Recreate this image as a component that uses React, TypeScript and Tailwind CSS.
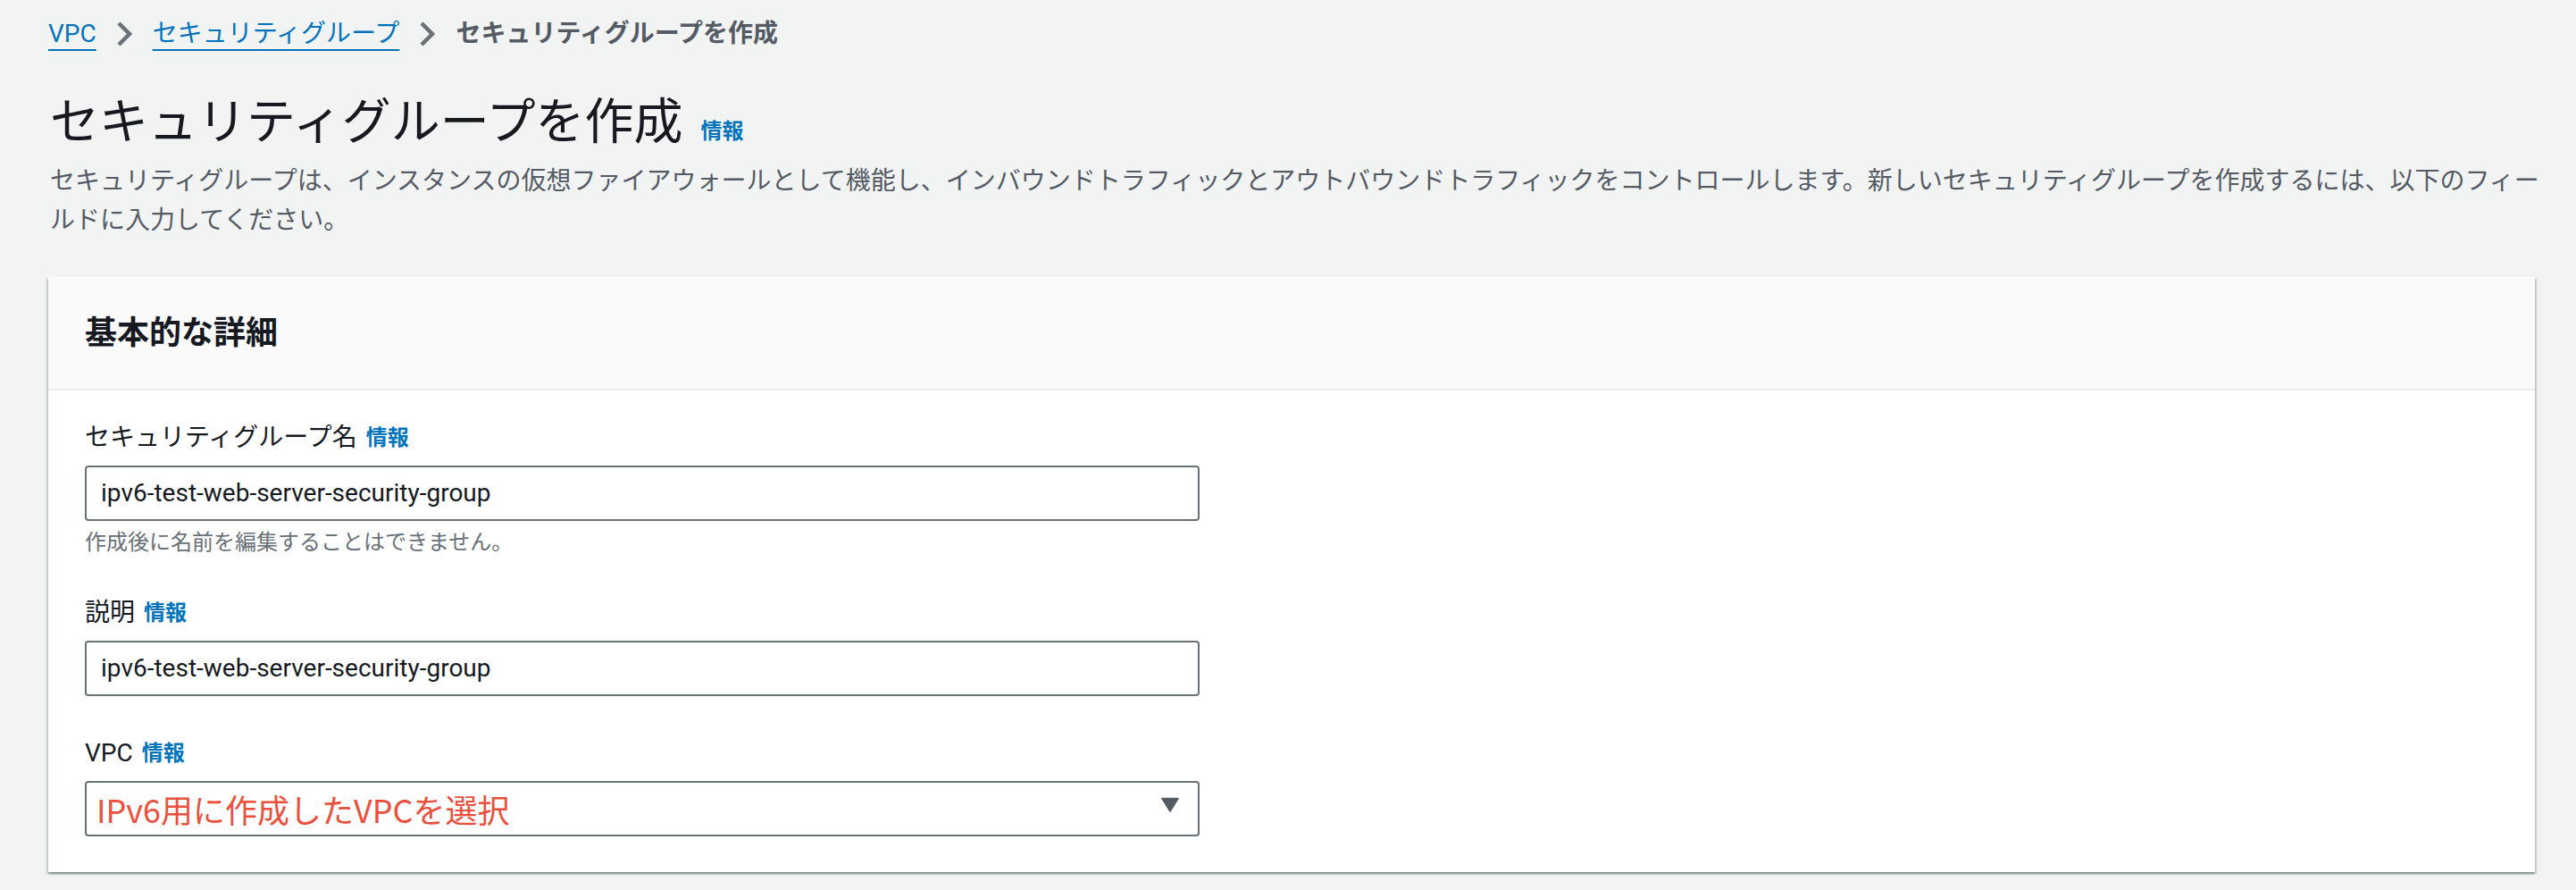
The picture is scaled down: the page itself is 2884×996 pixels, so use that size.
import React from "react";

function Info() {
  return <span className="text-[24px] font-bold text-[#0073bb] leading-none">情報</span>;
}

function Chevron() {
  return (
    <svg width="19" height="30" viewBox="0 0 19 30" className="mx-[22px] shrink-0">
      <path d="M3 3 L15 15 L3 27" fill="none" stroke="#687078" strokeWidth="4.5" strokeLinejoin="miter" />
    </svg>
  );
}

function TextInput({ value }: { value: string }) {
  return (
    <div className="mt-[11px] w-[1248px] h-[62px] border-2 border-[#687078] rounded-[4px] bg-white flex items-center pl-[16px] text-[28px] text-[#16191f]">
      {value}
    </div>
  );
}

export default function App() {
  return (
    <div className="min-h-[996px] w-[2884px] bg-[#f2f3f3] pl-[54px] pr-[46px] pt-[18px] font-['Roboto','Noto_Sans_CJK_JP',sans-serif] overflow-hidden">
      {/* Breadcrumb */}
      <nav className="flex items-center h-[40px] text-[28px] leading-[40px]">
        <span className="text-[#0073bb] underline decoration-2 underline-offset-[8px]">VPC</span>
        <Chevron />
        <span className="text-[#0073bb] underline decoration-2 underline-offset-[8px]">セキュリティグループ</span>
        <Chevron />
        <span className="text-[#545b64] font-bold">セキュリティグループを作成</span>
      </nav>

      {/* Title */}
      <div className="mt-[42px] flex items-baseline h-[72px]">
        <h1 className="text-[55px] leading-[72px] font-normal text-[#16191f] pl-[2px]">セキュリティグループを作成</h1>
        <span className="ml-[20px]">
          <Info />
        </span>
      </div>

      {/* Description */}
      <p className="mt-[9px] text-[28px] leading-[44px] text-[#545b64] whitespace-nowrap pl-[2px]">
        セキュリティグループは、インスタンスの仮想ファイアウォールとして機能し、インバウンドトラフィックとアウトバウンドトラフィックをコントロールします。新しいセキュリティグループを作成するには、以下のフィー
        <br />
        ルドに入力してください。
      </p>

      {/* Card */}
      <section className="mt-[41px] w-[2784px] bg-white shadow-[0_2px_2px_0_rgba(0,28,36,0.3),2px_2px_2px_0_rgba(0,28,36,0.15),-2px_2px_2px_0_rgba(0,28,36,0.15)]">
        <header className="bg-[#fafafa] border-b-2 border-[#eaeded] px-[41px] h-[127px] flex items-center">
          <h2 className="text-[36px] font-bold text-[#16191f] leading-[44px]">基本的な詳細</h2>
        </header>
        <div className="px-[41px] pt-[33px] pb-[40px]">
          {/* Field 1 */}
          <div>
            <div className="flex items-center gap-[10px] h-[40px] text-[28px] text-[#16191f]">
              <span>セキュリティグループ名</span>
              <Info />
            </div>
            <TextInput value="ipv6-test-web-server-security-group" />
            <div className="mt-[6px] text-[24px] leading-[36px] text-[#687078]">作成後に名前を編集することはできません。</div>
          </div>

          {/* Field 2 */}
          <div className="mt-[41px]">
            <div className="flex items-center gap-[10px] h-[40px] text-[28px] text-[#16191f]">
              <span>説明</span>
              <Info />
            </div>
            <TextInput value="ipv6-test-web-server-security-group" />
          </div>

          {/* Field 3 */}
          <div className="mt-[44px]">
            <div className="flex items-center gap-[10px] h-[40px] text-[28px] text-[#16191f]">
              <span>VPC</span>
              <Info />
            </div>
            <div className="mt-[11px] w-[1248px] h-[62px] border-2 border-[#687078] rounded-[4px] bg-white flex items-center justify-between pl-[11px] pr-[21px]">
              <span className="text-[36px] text-[#e9503e] font-['Noto_Sans_CJK_JP',sans-serif]">IPv6用に作成したVPCを選択</span>
              <svg width="20" height="17" viewBox="0 0 20 17" className="mb-[10px]">
                <path d="M1 1.5 L19 1.5 L10 16 Z" fill="#545b64" stroke="#545b64" strokeWidth="1.5" strokeLinejoin="round" />
              </svg>
            </div>
          </div>
        </div>
      </section>
    </div>
  );
}
